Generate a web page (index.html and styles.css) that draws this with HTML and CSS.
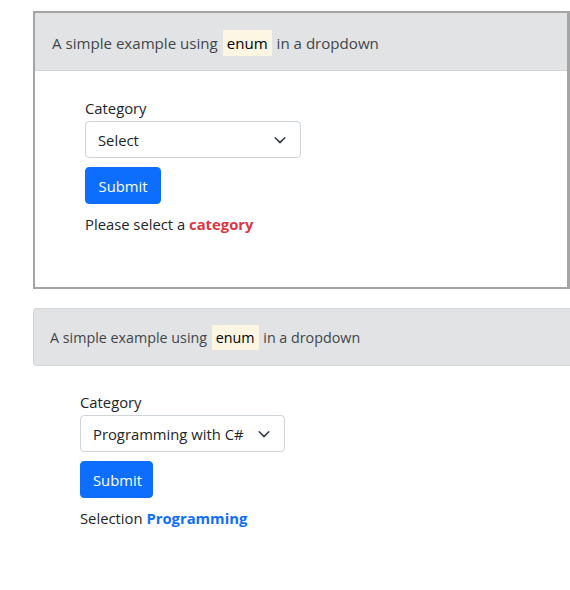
FILE: index.html
```html
<!DOCTYPE html>
<html>
<head>
<meta charset="utf-8">
<link rel="stylesheet" href="styles.css">
</head>
<body>
<div class="page">
  <section class="demo demo-first">
    <div class="demo-header">A simple example using <span class="code">enum</span> in a dropdown</div>
    <div class="demo-body">
      <label class="field-label">Category</label>
      <div class="select">
        <span>Select</span>
        <svg class="chev" width="14" height="14" viewBox="0 0 16 16"><path d="M2.5 5.5l5.5 5.5 5.5-5.5" fill="none" stroke="#343a40" stroke-width="1.7" stroke-linecap="round" stroke-linejoin="round"/></svg>
      </div>
      <button class="btn">Submit</button>
      <p class="result">Please select a <b class="danger">category</b></p>
    </div>
  </section>

  <section class="demo demo-second">
    <div class="demo-header">A simple example using <span class="code">enum</span> in a dropdown</div>
    <div class="demo-body">
      <label class="field-label">Category</label>
      <div class="select">
        <span>Programming with C#</span>
        <svg class="chev" width="14" height="14" viewBox="0 0 16 16"><path d="M2.5 5.5l5.5 5.5 5.5-5.5" fill="none" stroke="#343a40" stroke-width="1.7" stroke-linecap="round" stroke-linejoin="round"/></svg>
      </div>
      <button class="btn">Submit</button>
      <p class="result">Selection <b class="primary">Programming</b></p>
    </div>
  </section>
</div>
</body>
</html>
```

FILE: styles.css
```css
html, body {
  margin: 0;
  padding: 0;
  background: #fff;
  overflow: hidden;
}
body {
  font-family: "Open Sans", "Noto Sans", sans-serif;
  color: #212529;
  width: 570px;
}
.page {
  padding: 11px 0 0 33px;
  display: flex;
  flex-direction: column;
  gap: 19px;
}
.demo-first {
  border: 2px solid #a5a5a5;
  border-right-width: 3px;
  height: 274px;
  box-sizing: content-box;
  width: 532px;
}
.demo-first .demo-header {
  height: 58px;
  font-size: 15.1px;
  padding-top: 2px;
}
.demo-second {
  width: 560px;
}
.demo-header {
  box-sizing: border-box;
  display: flex;
  align-items: center;
  padding-left: 17px;
  background: #e2e3e5;
  border-bottom: 1px solid #d3d4d6;
  color: #41464b;
  font-size: 14.3px;
  white-space: pre;
}
.demo-second .demo-header {
  height: 58px;
  border: 1px solid #d3d4d6;
  border-right: none;
  border-radius: 4px 0 0 4px;
  padding-left: 16px;
}
.code {
  background: #fdf6e2;
  color: #000;
  padding: 3px 4px;
  margin: 0 1px;
}
.demo-body {
  display: flex;
  flex-direction: column;
  align-items: flex-start;
}
.demo-first .demo-body {
  padding: 25px 0 0 50px;
}
.demo-second .demo-body {
  padding: 24px 0 0 47px;
}
.field-label {
  line-height: 24px;
  font-size: 14.8px;
  margin-bottom: 1px;
}
.select {
  box-sizing: border-box;
  display: flex;
  align-items: center;
  justify-content: space-between;
  height: 37px;
  border: 1px solid #ced4da;
  border-radius: 4px;
  padding: 0 13px 0 12px;
  font-size: 14.8px;
  color: #212529;
}
.demo-first .select { width: 216px; }
.demo-second .select { width: 205px; }
.btn {
  font-family: inherit;
  font-size: 14.8px;
  color: #fff;
  background: #0d6efd;
  border: 1px solid #0d6efd;
  border-radius: 4px;
  height: 37px;
  margin-top: 9px;
  padding: 0 12px;
}
.demo-first .btn { width: 76px; }
.demo-second .btn { width: 73px; }
.result {
  margin: 8px 0 0;
  line-height: 24px;
  font-size: 14.8px;
}
.danger { color: #dc3545; }
.primary { color: #0d6efd; }
```
